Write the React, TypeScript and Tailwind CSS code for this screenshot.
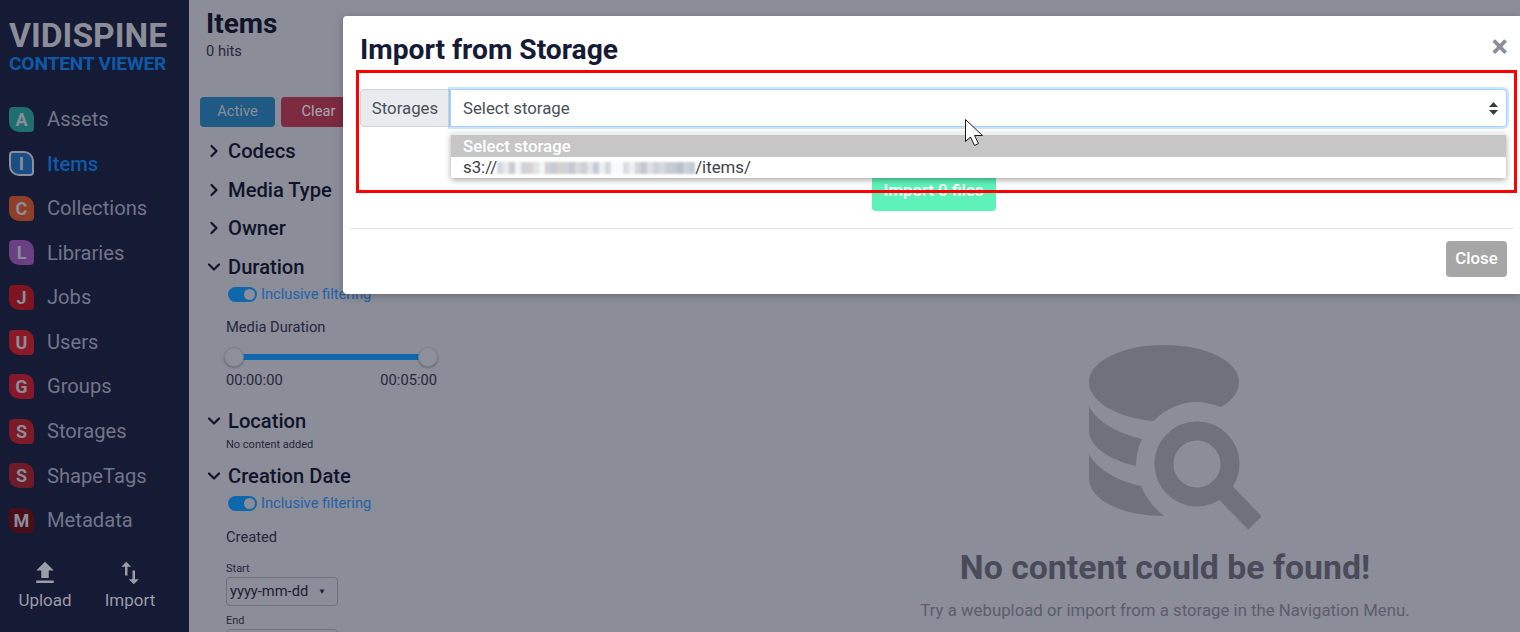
import React from "react";
import { MdFileUpload, MdImportExport } from "react-icons/md";
import { LuChevronRight, LuChevronDown } from "react-icons/lu";

const navItems = [
  { letter: "A", label: "Assets", tile: "bg-[#1f6f70]" },
  { letter: "I", label: "Items", tile: "bg-[#1a4d85] border-2 border-[#8b8d99]", active: true },
  { letter: "C", label: "Collections", tile: "bg-[#8f3f28]" },
  { letter: "L", label: "Libraries", tile: "bg-[#6a3f84]" },
  { letter: "J", label: "Jobs", tile: "bg-[#7d1420]" },
  { letter: "U", label: "Users", tile: "bg-[#8a1a25]" },
  { letter: "G", label: "Groups", tile: "bg-[#85192a]" },
  { letter: "S", label: "Storages", tile: "bg-[#7d1a28]" },
  { letter: "S", label: "ShapeTags", tile: "bg-[#6f1a28]" },
  { letter: "M", label: "Metadata", tile: "bg-[#4a0d1a]" },
];

// the blurred-out host name in the s3 path
const blurPixels = [
  "bg-[#d5d8dc]", "bg-[#e9eaec]", "bg-[#c9ccd2]", "bg-[#f4f4f5]", "bg-[#cfd3d8]", "bg-[#d9d3cf]",
  "bg-[#dfe3e8]", "bg-[#f5f5f5]", "bg-[#d0cfd2]", "bg-[#c9cdd3]", "bg-[#d5d2d0]", "bg-[#cfd3d8]",
  "bg-[#c8c8cc]", "bg-[#d8dade]", "bg-[#cfd0d2]", "bg-[#e2e6ea]", "bg-[#c8ccd2]", "bg-[#eef0f2]",
  "bg-[#d5d8dc]", "bg-[#fafafa]", "bg-[#fafafa]", "bg-[#dcdde0]", "bg-[#f0f0f0]", "bg-[#d2d5da]",
  "bg-[#c5c8ce]", "bg-[#dee0e4]", "bg-[#cfd2d8]", "bg-[#d8dade]", "bg-[#c9ccd2]", "bg-[#c2c8d2]",
  "bg-[#b8c0cc]", "bg-[#ccd2da]", "bg-[#c4cad4]",
];

function FilterHead({ label, open, className }: { label: string; open?: boolean; className: string }) {
  const Chevron = open ? LuChevronDown : LuChevronRight;
  return (
    <div className={`flex items-center text-[20.16px] font-medium text-[#10142a] ${className}`}>
      <Chevron className="w-[20px] h-[20px] ml-[4px] mr-[4px]" strokeWidth={2.6} />
      {label}
    </div>
  );
}

function Toggle({ className }: { className: string }) {
  return (
    <div className={`flex items-center ml-[28px] gap-[4px] ${className}`}>
      <span className="w-[29px] h-[15px] rounded-full bg-[#0f68ab] flex items-center justify-end pr-[2px]">
        <span className="w-[11px] h-[11px] rounded-full bg-[#8b8d99]" />
      </span>
      <span className="text-[14.7px] text-[#1f62a8]">Inclusive filtering</span>
    </div>
  );
}

function DateSelect({ value }: { value?: string }) {
  return (
    <div className="ml-[26px] w-[112px] h-[29px] border border-[#6f717d] rounded-[4px] flex items-center justify-between pl-[3px] pr-[11px] text-[14.7px] text-[#1b1e33]">
      {value}
      {value && <span className="text-[8px]">▼</span>}
    </div>
  );
}

function Sidebar() {
  return (
    <aside className="w-[189px] shrink-0 h-full bg-[#151a35] flex flex-col">
      <div className="h-[97px] pl-[9px] pt-[17px]">
        <div className="text-[33.6px] leading-[37px] font-bold text-[#8b8d99]">VIDISPINE</div>
        <div className="text-[19.2px] leading-[19px] font-bold text-[#0f5aa8] tracking-[-0.2px]">CONTENT VIEWER</div>
      </div>
      <nav className="flex flex-col">
        {navItems.map((item) => (
          <div key={item.label} className="h-[44.55px] flex items-center pl-[9px]">
            <span
              className={`w-[25px] h-[25px] rounded-[4px] rounded-tr-[10px] rounded-bl-[10px] flex items-center justify-center text-[18px] font-bold text-[#8b8d99] ${item.tile}`}
            >
              {item.letter}
            </span>
            <span className={`ml-[13px] text-[20.16px] ${item.active ? "font-medium text-[#0f5aa8]" : "text-[#72758a]"}`}>
              {item.label}
            </span>
          </div>
        ))}
      </nav>
      <div className="flex mt-[16px] text-[#9a9ca8] text-[17px]">
        <div className="w-[90px] flex flex-col items-center">
          <MdFileUpload className="w-[30px] h-[30px]" />
          <span>Upload</span>
        </div>
        <div className="w-[80px] flex flex-col items-center">
          <MdImportExport className="w-[30px] h-[30px]" />
          <span>Import</span>
        </div>
      </div>
    </aside>
  );
}

function Filters() {
  return (
    <section className="w-[621px] shrink-0 h-full overflow-hidden pl-[11px]">
      <div className="pl-[6px] pt-[7px] h-[97px]">
        <h1 className="text-[28px] leading-[34px] font-bold text-[#10142a]">Items</h1>
        <p className="text-[14.7px] leading-[20px] text-[#25283b]">0 hits</p>
      </div>
      <div className="flex gap-[6px]">
        <button className="w-[75px] h-[30px] pb-[2px] rounded-[4px] bg-[#1f5a85] text-[14.7px] text-[#8b8d99]">Active</button>
        <button className="w-[75px] h-[30px] pb-[2px] rounded-[4px] bg-[#7c2a40] text-[14.7px] text-[#a7a9b1]">Clear</button>
      </div>
      <FilterHead label="Codecs" className="mt-[10px] h-[28px]" />
      <FilterHead label="Media Type" className="mt-[11px] h-[28px]" />
      <FilterHead label="Owner" className="mt-[10px] h-[28px]" />
      <FilterHead label="Duration" open className="mt-[11px] h-[28px]" />
      <Toggle className="h-[16px] mt-[5px]" />
      <div className="ml-[26px] mt-[15px] text-[14.7px] leading-[20px] text-[#25283b]">Media Duration</div>
      <div className="ml-[24px] w-[214px] h-[20px] mt-[10px] flex items-center relative">
        <div className="mx-[9px] flex-1 h-[6px] bg-[#0f68ab]" />
        <span className="absolute left-0 w-[20px] h-[20px] rounded-full bg-[#8d8f9a] border border-[#7d7f8a] shadow-[0_1px_2px_rgba(0,0,0,0.3)]" />
        <span className="absolute right-0 w-[20px] h-[20px] rounded-full bg-[#8d8f9a] border border-[#7d7f8a] shadow-[0_1px_2px_rgba(0,0,0,0.3)]" />
      </div>
      <div className="ml-[26px] w-[211px] mt-[3px] flex justify-between text-[14.7px] leading-[20px] text-[#25283b]">
        <span>00:00:00</span>
        <span>00:05:00</span>
      </div>
      <FilterHead label="Location" open className="mt-[17px] h-[28px]" />
      <div className="ml-[26px] mt-[2px] text-[11px] leading-[16px] text-[#25283b]">No content added</div>
      <FilterHead label="Creation Date" open className="mt-[9px] h-[28px]" />
      <Toggle className="h-[16px] mt-[5px]" />
      <div className="ml-[26px] mt-[16px] text-[14.7px] leading-[20px] text-[#25283b]">Created</div>
      <div className="ml-[26px] mt-[15px] text-[11px] leading-[14px] text-[#25283b]">Start</div>
      <div className="mt-[1px]">
        <DateSelect value="yyyy-mm-dd" />
      </div>
      <div className="ml-[26px] mt-[8px] text-[11px] leading-[14px] text-[#25283b]">End</div>
      <div className="mt-[1px]">
        <DateSelect />
      </div>
    </section>
  );
}

function EmptyState() {
  return (
    <main className="flex-1 h-full overflow-hidden flex flex-col items-center pt-[345px]">
      <svg width="172" height="185" viewBox="0 0 172 185" className="fill-[#6f717d] translate-x-[10px]">
        <path d="M0 37C0 16 34 0 75 0C117 0 150 16 150 37C150 47 143 56 132 62C124 59 115 57 108 57C92 57 76 64 64.5 76C29 73 0 57 0 37Z" />
        <path d="M0 61C8 77 28 88 53 94C49 102 47 112 47 121C20 115 0 101 0 86Z" />
        <path d="M0 109C8 124 28 136 52 141C57 153 65 163 75 171C33 171 0 155 0 133Z" />
        <circle cx="108" cy="119" r="33" fill="none" stroke="#6f717d" strokeWidth="19" />
        <path d="M136 147L166 178" fill="none" stroke="#6f717d" strokeWidth="19" />
      </svg>
      <h2 className="mt-[16px] text-[33.8px] leading-[44px] font-bold text-[#4a4b5a] whitespace-nowrap">No content could be found!</h2>
      <p className="mt-[8px] text-[16.8px] leading-[24px] text-[#5c5d6b] whitespace-nowrap">
        Try a webupload or import from a storage in the Navigation Menu.
      </p>
    </main>
  );
}

function ImportModal() {
  return (
    <div className="absolute left-[343px] right-0 top-[16px] h-[278px] bg-white rounded-l-[4px] flex flex-col shadow-[0_2px_8px_rgba(0,0,0,0.25)]">
      <div className="h-[73px] pl-[17px] pr-[12px] pt-[15px] flex justify-between">
        <h3 className="text-[28.2px] leading-[38px] font-bold text-[#151a35]">Import from Storage</h3>
        <span className="text-[31px] leading-[32px] font-bold text-[#8a8c98]">×</span>
      </div>
      <div className="pl-[17px] pr-[13px]">
        <div className="flex h-[38px] text-[16.8px] text-[#495057]">
          <div className="w-[90px] pt-[1px] bg-[#e9ecef] border border-[#ced4da] rounded-l-[4px] flex items-center justify-center">
            Storages
          </div>
          <div className="flex-1 pt-[1px] bg-white border border-[#a8d0f8] rounded-r-[4px] shadow-[0_0_0_2px_rgba(0,123,255,0.2)] flex items-center justify-between pl-[12px] pr-[8px]">
            Select storage
            <svg width="9" height="13" viewBox="0 0 9 13" className="fill-[#343a40]">
              <path d="M4.5 0L9 5H0Z" />
              <path d="M4.5 13L0 8H9Z" />
            </svg>
          </div>
        </div>
        <div className="flex justify-center mt-[44px]">
          <button className="w-[124px] h-[40px] rounded-[4px] bg-[#5cf2b8] text-[16.8px] font-medium text-white">
            Import 0 files
          </button>
        </div>
      </div>
      <div className="mt-[17px] mx-[7px] border-t border-[#e2e3e5]" />
      <div className="flex justify-end pr-[13px] pt-[12px]">
        <button className="w-[61px] h-[36px] rounded-[4px] bg-[#a6a6a6] text-[16.8px] font-medium text-white">Close</button>
      </div>

      {/* open select list */}
      <div className="absolute left-[108px] right-[14px] top-[117px] bg-white border-t-2 border-[#eeeeee] shadow-[0_2px_6px_rgba(0,0,0,0.35)] text-[16.8px]">
        <div className="bg-[#c6c6c6] pl-[12px] pt-[1px] font-medium text-white h-[22px] leading-[21px]">Select storage</div>
        <div className="pl-[12px] text-[#3c4048] h-[21px] leading-[21px] flex items-center">
          s3://
          <span className="flex h-[12px] blur-[1px]">
            {blurPixels.map((cls, i) => (
              <span key={i} className={`w-[6px] ${cls}`} />
            ))}
          </span>
          /items/
        </div>
      </div>

      {/* red annotation around the select */}
      <div className="absolute left-[13px] right-[3px] top-[54px] h-[123px] border-[3px] border-[#ff0000] pointer-events-none" />

      {/* mouse pointer from the capture */}
      <svg width="19" height="28" viewBox="0 0 19 28" className="absolute left-[622px] top-[103px]">
        <path d="M.5.5V22.5L5.5 18L9.5 26.5L13.5 24.5L9.5 16.5H17.5Z" fill="#fff" stroke="#1a1a1a" strokeWidth="1" />
      </svg>
    </div>
  );
}

export default function App() {
  return (
    <div className="relative w-[1520px] h-[632px] overflow-hidden bg-[#8b8d99] flex font-['Roboto',sans-serif]">
      <Sidebar />
      <Filters />
      <EmptyState />
      <ImportModal />
    </div>
  );
}
